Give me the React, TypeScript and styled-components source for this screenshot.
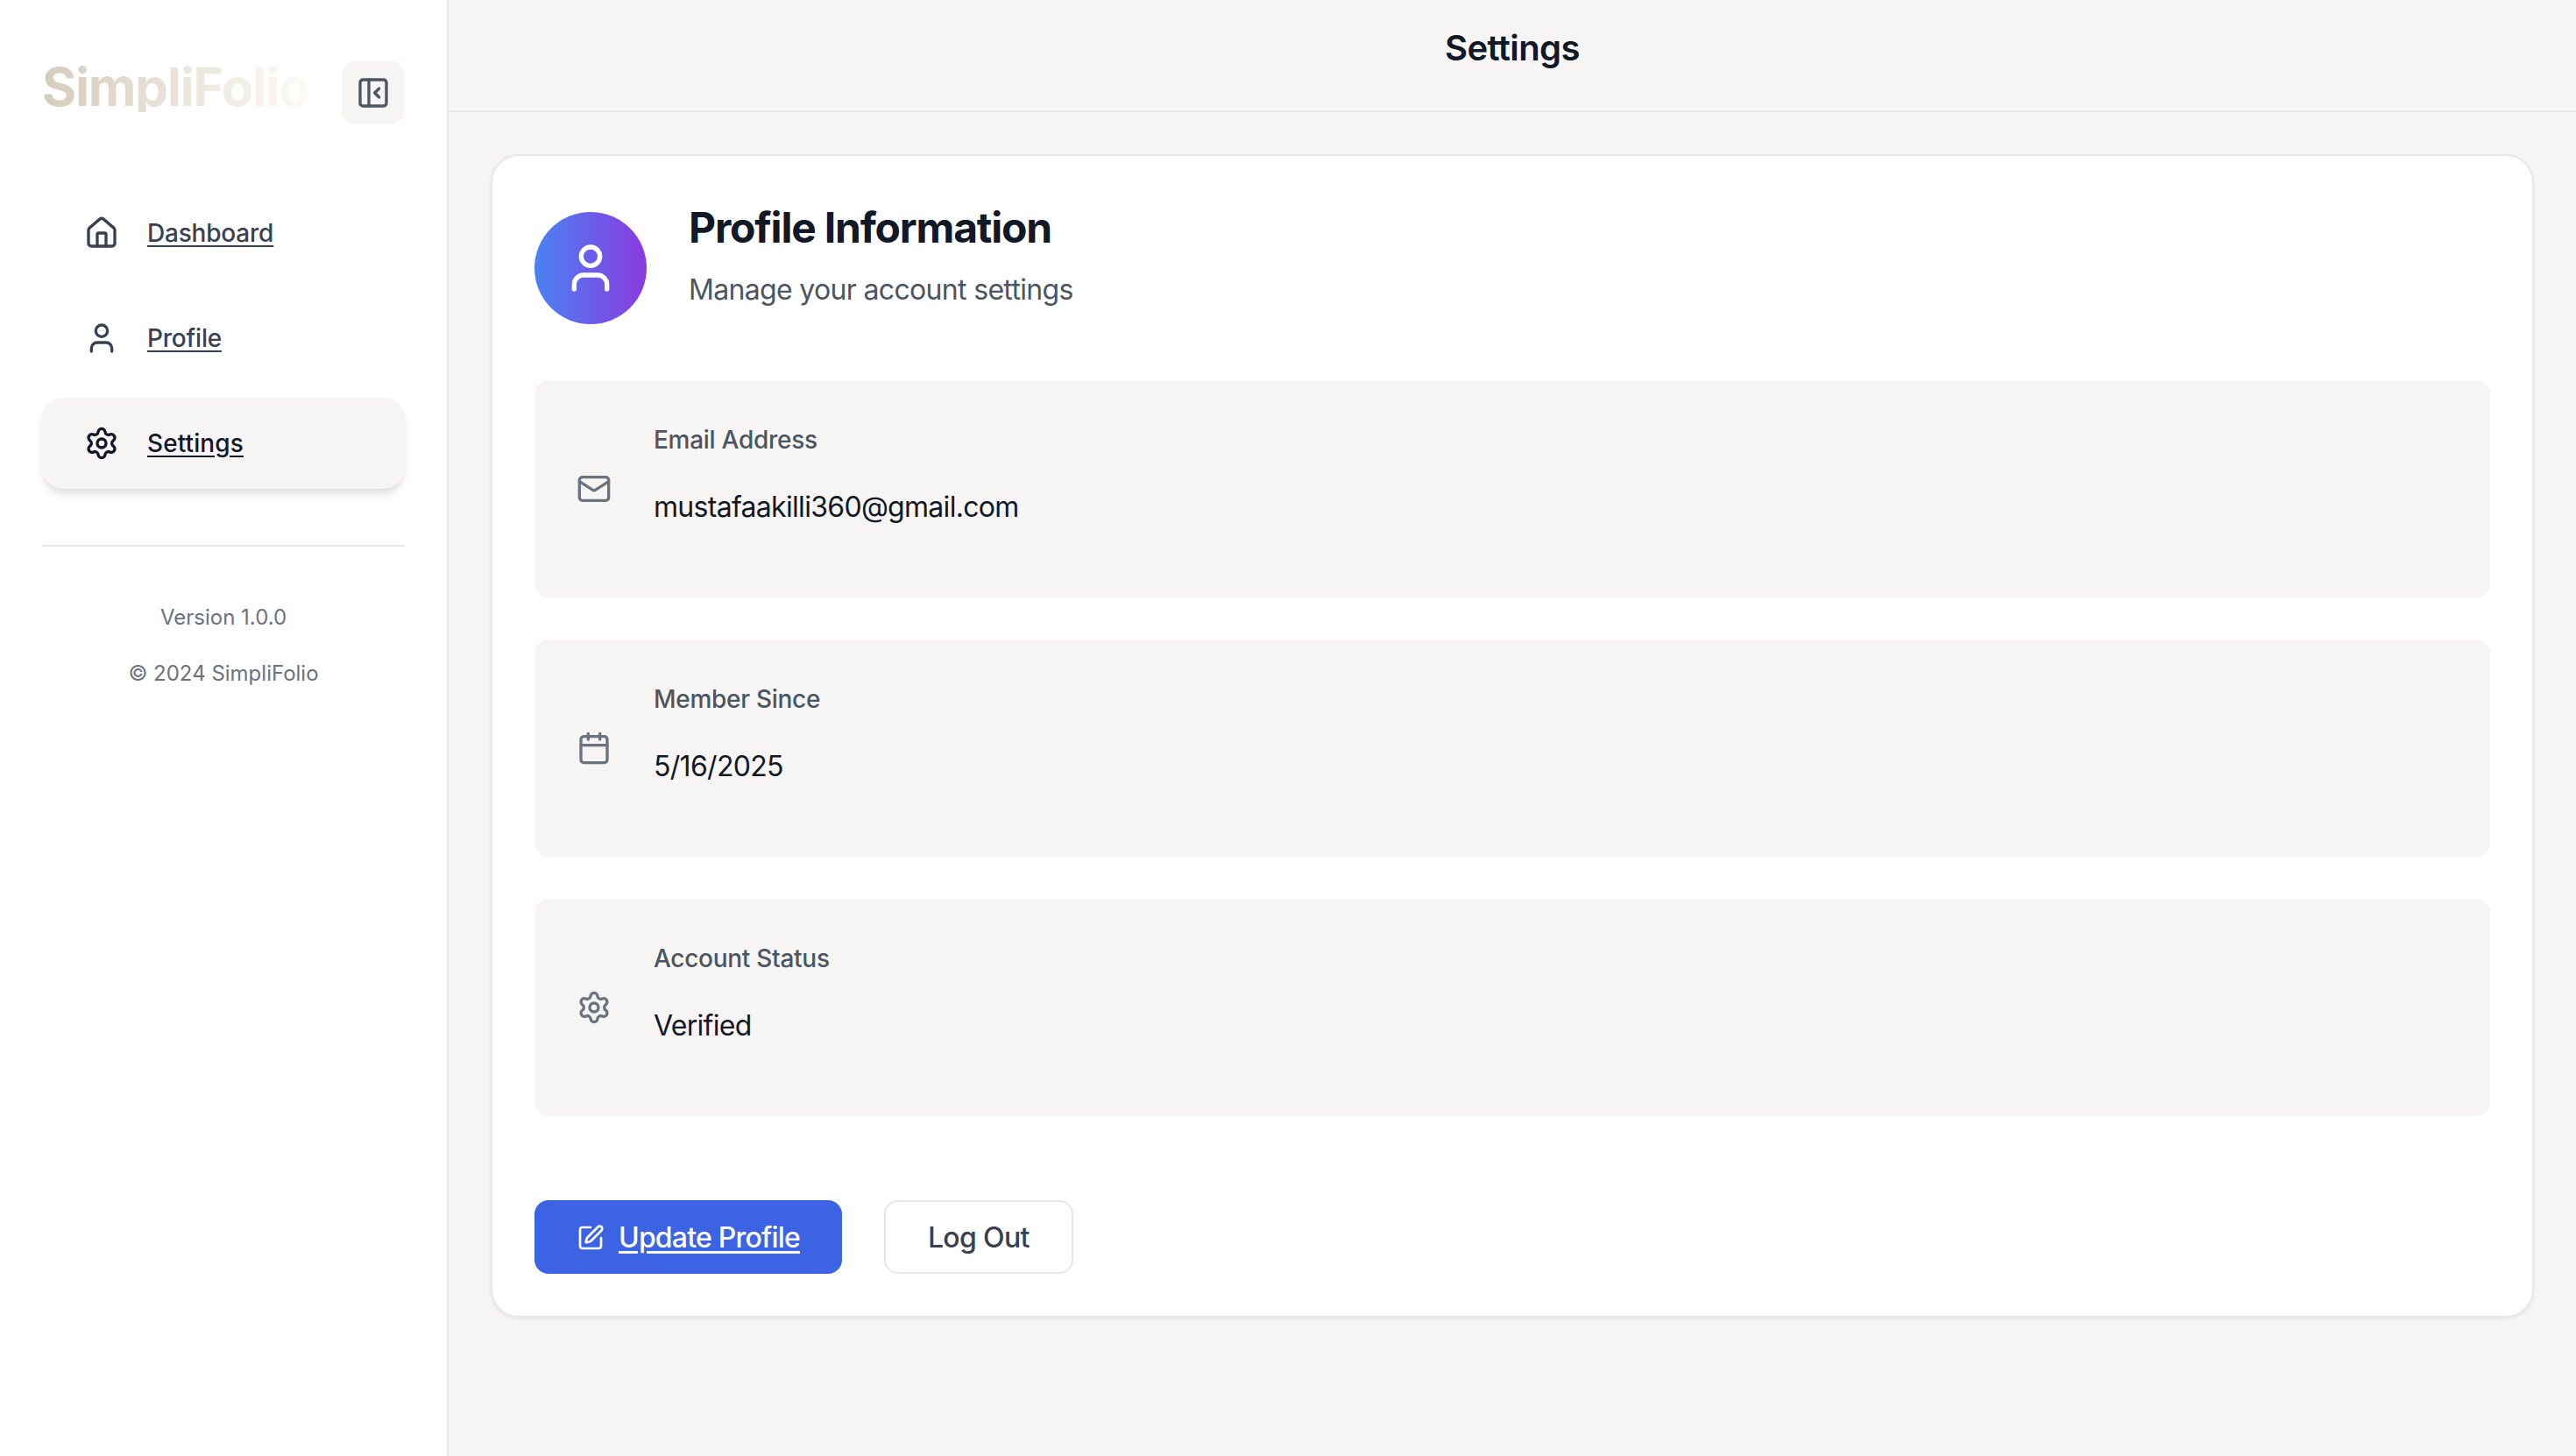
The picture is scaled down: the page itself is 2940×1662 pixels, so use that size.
import React from "react";
import styled, { createGlobalStyle } from "styled-components";
import { Calendar, Home, Mail, PanelLeftClose, Settings, SquarePen, User } from "lucide-react";

const GlobalStyle = createGlobalStyle`
  * {
    box-sizing: border-box;
  }
  html, body {
    margin: 0;
    padding: 0;
    background-color: #f6f5f3;
    font-family: Inter, "Liberation Sans", sans-serif;
  }
  p, h1, h2 {
    margin: 0;
  }
`;

const Layout = styled.div`
  display: flex;
  min-height: 100vh;
`;

const Sidebar = styled.aside`
  width: 512px;
  flex-shrink: 0;
  padding: 70px 48px 48px;
  background-color: #ffffff;
  border-right: 2px solid #e5e7eb;
`;

const SidebarHead = styled.div`
  display: flex;
  align-items: flex-start;
  justify-content: space-between;
  margin-bottom: 72px;
`;

const Logo = styled.h1`
  font-size: 60px;
  line-height: 58px;
  font-weight: 700;
  letter-spacing: -1.35px;
  color: transparent;
  background: linear-gradient(to right, #d6ccbd, #fdfaf6);
  -webkit-background-clip: text;
  background-clip: text;
`;

const ToggleButton = styled.button`
  display: flex;
  padding: 16px;
  border: none;
  border-radius: 16px;
  background-color: #f6f5f3;
  color: #4b5563;
`;

const Nav = styled.nav`
  display: flex;
  flex-direction: column;
  gap: 16px;
`;

const NavItem = styled.a<{ $active?: boolean }>`
  display: flex;
  align-items: center;
  gap: 32px;
  padding: 32px 48px;
  border-radius: 24px;
  font-size: 28px;
  line-height: 40px;
  font-weight: 500;
  letter-spacing: ${(p) => (p.$active ? "0.1px" : "-0.2px")};
  color: ${(p) => (p.$active ? "#111827" : "#374151")};
  background-color: ${(p) => (p.$active ? "#f6f5f3" : "transparent")};
  box-shadow: ${(p) => (p.$active ? "0 8px 12px -2px rgba(0, 0, 0, 0.1), 0 4px 8px -4px rgba(0, 0, 0, 0.1)" : "none")};
  text-decoration: underline;
  text-underline-offset: 4px;
`;

const SidebarFoot = styled.div`
  margin-top: 64px;
  padding-top: 65px;
  border-top: 2px solid #e5e7eb;
  text-align: center;
  font-size: 24px;
  line-height: 32px;
  color: #6b7280;
  p + p {
    margin-top: 32px;
  }
`;

const Main = styled.main`
  flex: 1;
  min-width: 0;
`;

const TopBar = styled.header`
  height: 128px;
  padding-top: 27px;
  border-bottom: 2px solid #e5e7eb;
  text-align: center;
`;

const PageTitle = styled.h2`
  font-size: 40px;
  line-height: 56px;
  font-weight: 600;
  letter-spacing: -0.6px;
  color: #111827;
`;

const Content = styled.div`
  padding: 48px;
`;

const Card = styled.section`
  padding: 48px;
  background-color: #ffffff;
  border: 2px solid #e5e7eb;
  border-radius: 32px;
  box-shadow: 0 2px 4px 0 rgba(0, 0, 0, 0.06);
`;

const CardHead = styled.div`
  display: flex;
  align-items: center;
  gap: 48px;
  margin-bottom: 48px;
`;

const Avatar = styled.div`
  display: flex;
  align-items: center;
  justify-content: center;
  width: 128px;
  height: 128px;
  border-radius: 50%;
  background: linear-gradient(to right, #4a82f2, #8b3ae0);
  color: #ffffff;
`;

const CardTitle = styled.h2`
  padding-top: 2px;
  margin-bottom: 15px;
  font-size: 48px;
  line-height: 64px;
  font-weight: 700;
  letter-spacing: -1.2px;
  color: #111827;
`;

const CardSubtitle = styled.p`
  margin-bottom: 31px;
  font-size: 32px;
  line-height: 48px;
  letter-spacing: -0.67px;
  color: #4b5563;
`;

const InfoList = styled.div`
  display: flex;
  flex-direction: column;
  gap: 48px;
  margin-bottom: 96px;
`;

const InfoRow = styled.div`
  display: flex;
  align-items: center;
  gap: 48px;
  padding: 48px;
  border-radius: 16px;
  background-color: #f6f5f3;
  color: #6b7280;
`;

const InfoLabel = styled.p`
  margin-bottom: 33px;
  font-size: 28px;
  line-height: 40px;
  font-weight: 500;
  letter-spacing: -0.28px;
  color: #4b5563;
`;

const InfoValue = styled.p`
  margin-bottom: 31px;
  font-size: 32px;
  line-height: 48px;
  letter-spacing: -0.7px;
  color: #111827;
`;

const Actions = styled.div`
  display: flex;
  gap: 48px;
`;

const PrimaryButton = styled.a`
  display: flex;
  align-items: center;
  gap: 16px;
  padding: 19px 48px 17px;
  border-radius: 16px;
  background-color: #3b63e4;
  color: #ffffff;
  font-size: 32px;
  line-height: 48px;
  font-weight: 500;
  letter-spacing: -0.8px;
  text-decoration: underline;
  text-underline-offset: 4px;
`;

const OutlineButton = styled.button`
  padding: 17px 48px 15px;
  border: 2px solid #e5e7eb;
  border-radius: 16px;
  background-color: #ffffff;
  color: #374151;
  font-family: inherit;
  font-size: 32px;
  line-height: 48px;
  font-weight: 500;
  letter-spacing: -0.67px;
`;

const navItems = [
  { label: "Dashboard", icon: Home },
  { label: "Profile", icon: User },
  { label: "Settings", icon: Settings, active: true },
];

const infoItems = [
  { label: "Email Address", value: "mustafaakilli360@gmail.com", icon: Mail },
  { label: "Member Since", value: "5/16/2025", icon: Calendar },
  { label: "Account Status", value: "Verified", icon: Settings },
];

export default function App() {
  return (
    <Layout>
      <GlobalStyle />
      <Sidebar>
        <SidebarHead>
          <Logo>SimpliFolio</Logo>
          <ToggleButton>
            <PanelLeftClose size={40} />
          </ToggleButton>
        </SidebarHead>
        <Nav>
          {navItems.map((item) => (
            <NavItem key={item.label} $active={item.active}>
              <item.icon size={40} />
              {item.label}
            </NavItem>
          ))}
        </Nav>
        <SidebarFoot>
          <p>Version 1.0.0</p>
          <p>© 2024 SimpliFolio</p>
        </SidebarFoot>
      </Sidebar>
      <Main>
        <TopBar>
          <PageTitle>Settings</PageTitle>
        </TopBar>
        <Content>
          <Card>
            <CardHead>
              <Avatar>
                <User size={64} />
              </Avatar>
              <div>
                <CardTitle>Profile Information</CardTitle>
                <CardSubtitle>Manage your account settings</CardSubtitle>
              </div>
            </CardHead>
            <InfoList>
              {infoItems.map((item) => (
                <InfoRow key={item.label}>
                  <item.icon size={40} />
                  <div>
                    <InfoLabel>{item.label}</InfoLabel>
                    <InfoValue>{item.value}</InfoValue>
                  </div>
                </InfoRow>
              ))}
            </InfoList>
            <Actions>
              <PrimaryButton>
                <SquarePen size={32} />
                Update Profile
              </PrimaryButton>
              <OutlineButton>Log Out</OutlineButton>
            </Actions>
          </Card>
        </Content>
      </Main>
    </Layout>
  );
}
